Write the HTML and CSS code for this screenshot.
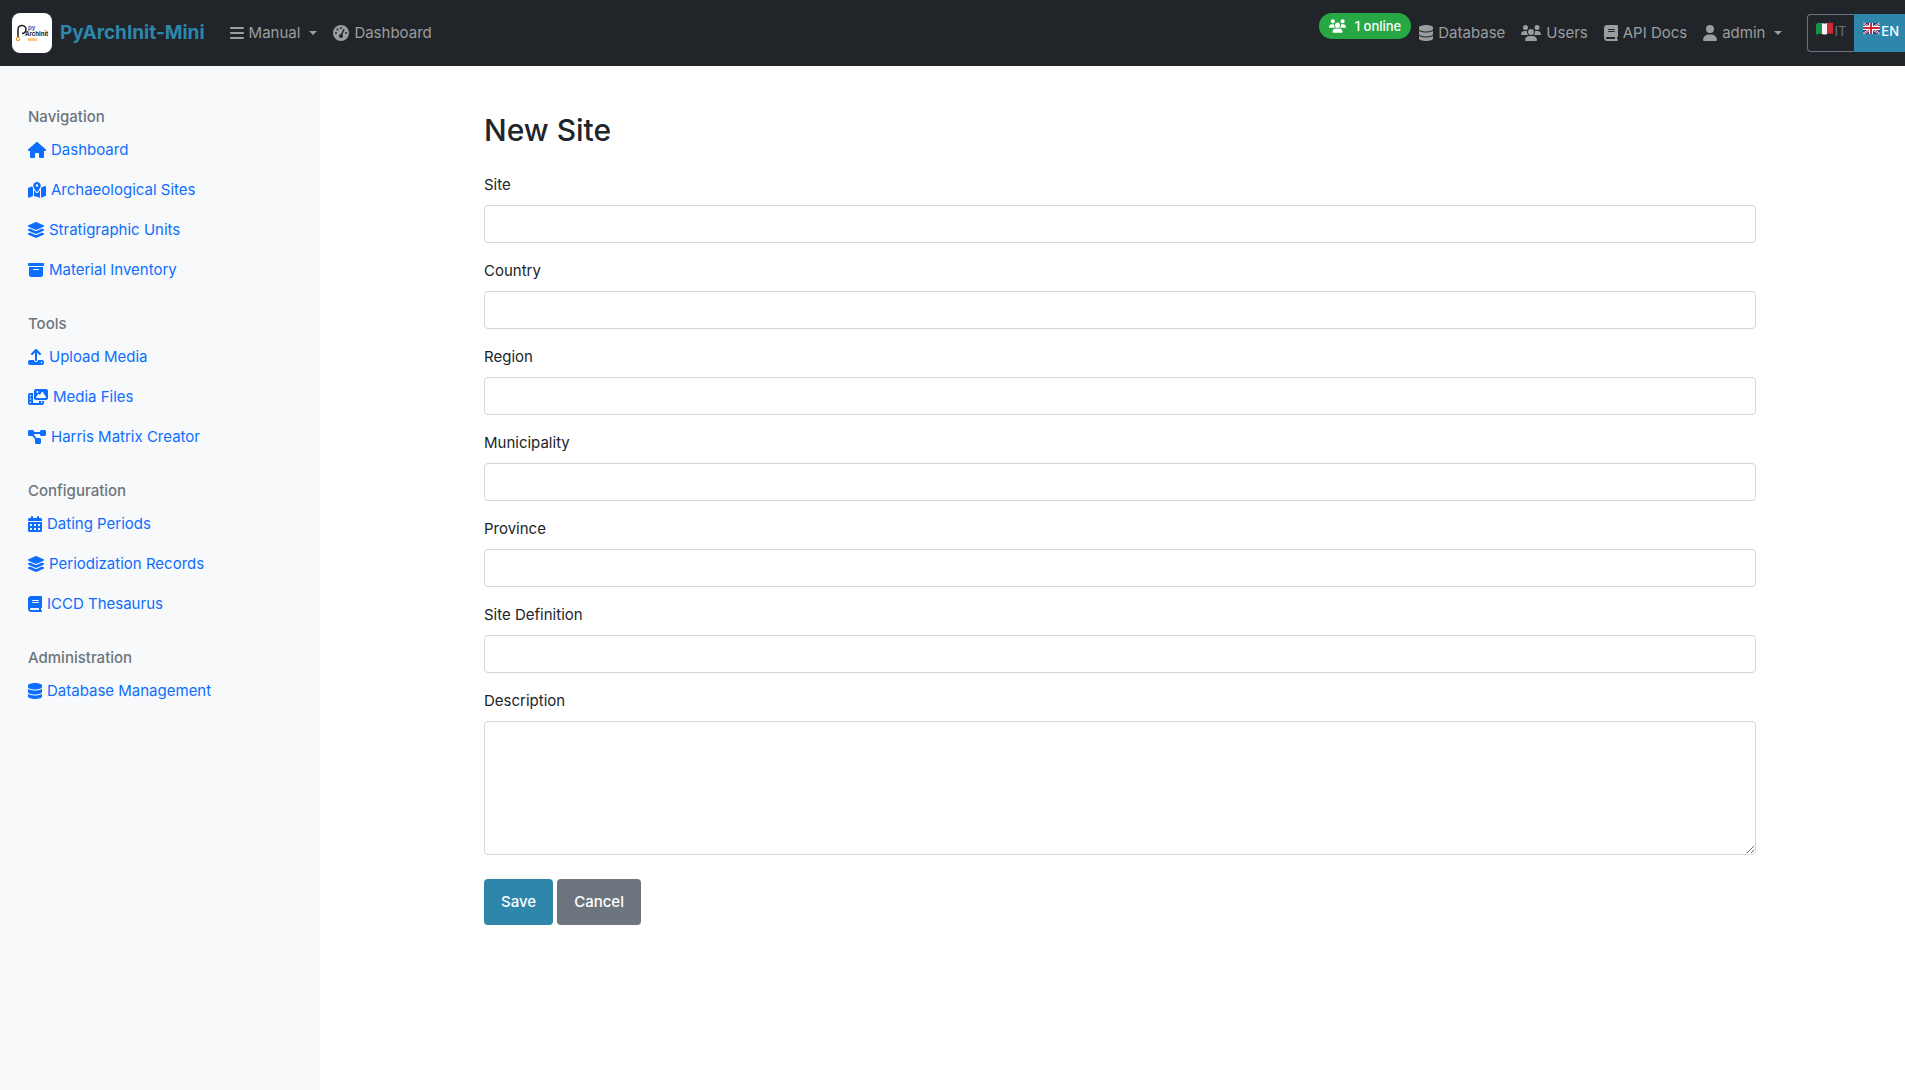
FILE: index.html
```html
<!DOCTYPE html>
<html lang="en">
<head>
<meta charset="utf-8">
<meta name="viewport" content="width=device-width, initial-scale=1">
<title>New Site - PyArchInit-Mini</title>
<link rel="stylesheet" href="styles.css">
</head>
<body>
<svg class="sprite" aria-hidden="true">
  <symbol id="bars" viewBox="0 0 448 512"><path d="M0 96C0 78.300 14.300 64 32 64H416c17.700 0 32 14.300 32 32s-14.300 32-32 32H32C14.300 128 0 113.700 0 96zM0 256c0-17.700 14.300-32 32-32H416c17.700 0 32 14.300 32 32s-14.300 32-32 32H32c-17.700 0-32-14.300-32-32zM448 416c0 17.700-14.300 32-32 32H32c-17.700 0-32-14.300-32-32s14.300-32 32-32H416c17.700 0 32 14.300 32 32z"/></symbol>
  <symbol id="gauge" viewBox="0 0 512 512"><path fill-rule="evenodd" d="M0 256a256 256 0 1 1 512 0A256 256 0 1 1 0 256zM288 96a32 32 0 1 0 -64 0 32 32 0 1 0 64 0zM256 416c35.300 0 64-28.700 64-64c0-17.400-6.900-33.100-18.100-44.600L366 161.700c5.300-12.100-.2-26.300-12.300-31.600s-26.300 .2-31.600 12.300L257.900 288c-.6 0-1.300 0-1.900 0c-35.300 0-64 28.700-64 64s28.700 64 64 64zM176 144a32 32 0 1 0 -64 0 32 32 0 1 0 64 0zM96 288a32 32 0 1 0 0-64 32 32 0 1 0 0 64zm352-32a32 32 0 1 0 -64 0 32 32 0 1 0 64 0z"/></symbol>
  <symbol id="users" viewBox="0 0 640 512"><path d="M144 0a80 80 0 1 1 0 160A80 80 0 1 1 144 0zM512 0a80 80 0 1 1 0 160A80 80 0 1 1 512 0zM0 298.700C0 239.800 47.800 192 106.700 192h42.700c15.900 0 31 3.500 44.600 9.700c-1.300 7.200-1.900 14.700-1.900 22.300c0 38.200 16.800 72.500 43.300 96c-.2 0-.4 0-.7 0H21.300C9.600 320 0 310.400 0 298.700zM405.300 320c-.2 0-.4 0-.7 0c26.600-23.500 43.300-57.800 43.300-96c0-7.600-.7-15-1.900-22.300c13.600-6.300 28.700-9.700 44.600-9.700h42.700C592.200 192 640 239.800 640 298.700c0 11.800-9.600 21.300-21.300 21.300H405.300zM224 224a96 96 0 1 1 192 0 96 96 0 1 1 -192 0zM128 485.300C128 411.700 187.700 352 261.300 352H378.700C452.300 352 512 411.700 512 485.300c0 14.700-11.900 26.700-26.700 26.700H154.700c-14.700 0-26.700-11.900-26.700-26.700z"/></symbol>
  <symbol id="database" viewBox="0 0 448 512"><path d="M448 80v48c0 44.200-100.300 80-224 80S0 172.200 0 128V80C0 35.800 100.300 0 224 0S448 35.800 448 80zM393.200 214.700c20.800-7.400 39.900-16.900 54.800-28.600V288c0 44.200-100.300 80-224 80S0 332.200 0 288V186.100c14.900 11.800 34 21.200 54.800 28.600C99.700 230.700 159.500 240 224 240s124.300-9.300 169.200-25.300zM0 346.100c14.900 11.800 34 21.200 54.800 28.600C99.700 390.700 159.500 400 224 400s124.300-9.300 169.200-25.300c20.800-7.400 39.900-16.900 54.800-28.600V432c0 44.200-100.300 80-224 80S0 476.200 0 432V346.100z"/></symbol>
  <symbol id="book" viewBox="0 0 448 512"><path fill-rule="evenodd" d="M96 0C43 0 0 43 0 96V416c0 53 43 96 96 96H384h32c17.700 0 32-14.300 32-32s-14.300-32-32-32V384c17.700 0 32-14.300 32-32V32c0-17.700-14.300-32-32-32H384 96zm0 384H352v64H96c-17.700 0-32-14.300-32-32s14.300-32 32-32zm32-240c0-8.800 7.200-16 16-16H336c8.800 0 16 7.200 16 16s-7.200 16-16 16H144c-8.800 0-16-7.200-16-16zm16 48H336c8.800 0 16 7.200 16 16s-7.200 16-16 16H144c-8.800 0-16-7.200-16-16s7.200-16 16-16z"/></symbol>
  <symbol id="user" viewBox="0 0 448 512"><path d="M224 256A128 128 0 1 0 224 0a128 128 0 1 0 0 256zm-45.700 48C79.800 304 0 383.800 0 482.300C0 498.700 13.300 512 29.700 512H418.300c16.400 0 29.700-13.300 29.700-29.700C448 383.800 368.200 304 269.700 304H178.300z"/></symbol>
  <symbol id="house" viewBox="0 0 576 512"><path d="M575.800 255.500c0 18-15 32.100-32 32.100h-32l.7 160.200c0 2.700-.2 5.400-.5 8.100V472c0 22.100-17.900 40-40 40H392c-22.100 0-40-17.900-40-40V384c0-17.700-14.300-32-32-32H256c-17.700 0-32 14.300-32 32v88c0 22.100-17.900 40-40 40H104c-22.100 0-40-17.900-40-40V287.600H32c-18 0-32-14-32-32.100c0-9 3-17 10-24L266.400 8c7-7 15-8 22-8s15 2 21 7L564.800 231.500c8 7 12 15 11 24z"/></symbol>
  <symbol id="map" viewBox="0 0 576 512"><path fill-rule="evenodd" d="M408 120c0 54.600-73.100 151.900-105.200 192c-7.700 9.600-22 9.600-29.600 0C241.100 271.900 168 174.600 168 120C168 53.700 221.700 0 288 0s120 53.700 120 120zm8 80.400c3.500-6.900 6.700-13.800 9.600-20.600c.5-1.200 1-2.500 1.500-3.700l116-46.400C558.900 123.400 576 135 576 152V422.800c0 9.800-6 18.600-15.100 22.300L416 503V200.400zM137.600 138.300c2.400 14.100 7.200 28.300 12.800 41.500c2.900 6.800 6.100 13.700 9.600 20.600V451.800L32.900 502.700C17.100 509 0 497.400 0 480.400V209.600c0-9.800 6-18.600 15.100-22.300l122.600-49zM327.800 332c13.900-17.400 35.700-45.700 56.200-77V504.300L192 449.400V255c20.500 31.300 42.300 59.600 56.200 77c20.500 25.600 59.100 25.600 79.600 0zM288 152a40 40 0 1 0 0-80 40 40 0 1 0 0 80z"/></symbol>
  <symbol id="layers" viewBox="32 0 512 512"><path d="M264.500 5.200c14.900-6.900 32.100-6.900 47 0l218.600 101c8.500 3.900 13.900 12.400 13.900 21.800s-5.400 17.900-13.900 21.800l-218.600 101c-14.900 6.900-32.100 6.900-47 0L45.900 149.800C37.400 145.800 32 137.300 32 128s5.400-17.900 13.900-21.800L264.500 5.200zM476.900 209.600l53.200 24.600c8.500 3.900 13.900 12.400 13.900 21.800s-5.400 17.900-13.900 21.800l-218.600 101c-14.900 6.900-32.100 6.900-47 0L45.900 277.800C37.400 273.800 32 265.300 32 256s5.400-17.900 13.900-21.800l53.200-24.600 152 70.200c23.400 10.800 50.400 10.800 73.800 0l152-70.200zm-152 198.200l152-70.200 53.200 24.600c8.500 3.900 13.900 12.400 13.900 21.800s-5.400 17.900-13.900 21.800l-218.600 101c-14.900 6.900-32.100 6.900-47 0L45.900 405.800C37.400 401.800 32 393.300 32 384s5.400-17.900 13.900-21.800l53.200-24.600 152 70.200c23.400 10.800 50.400 10.800 73.800 0z"/></symbol>
  <symbol id="archive" viewBox="0 0 512 512"><path fill-rule="evenodd" d="M32 32H480c17.700 0 32 14.300 32 32V96c0 17.700-14.300 32-32 32H32C14.300 128 0 113.700 0 96V64C0 46.300 14.300 32 32 32zm0 128H480V416c0 35.300-28.700 64-64 64H96c-35.300 0-64-28.700-64-64V160zm128 80c0 8.800 7.200 16 16 16H336c8.800 0 16-7.200 16-16s-7.200-16-16-16H176c-8.800 0-16 7.200-16 16z"/></symbol>
  <symbol id="upload" viewBox="0 0 512 512"><path fill-rule="evenodd" d="M288 109.300V352c0 17.700-14.300 32-32 32s-32-14.300-32-32V109.300l-73.400 73.400c-12.500 12.500-32.800 12.500-45.300 0s-12.500-32.800 0-45.300l128-128c12.500-12.500 32.800-12.500 45.300 0l128 128c12.500 12.500 12.500 32.800 0 45.300s-32.800 12.500-45.300 0L288 109.300zM64 352H192c0 35.300 28.700 64 64 64s64-28.700 64-64H448c35.300 0 64 28.700 64 64v32c0 35.300-28.700 64-64 64H64c-35.300 0-64-28.700-64-64V416c0-35.300 28.700-64 64-64zM432 456a24 24 0 1 0 0-48 24 24 0 1 0 0 48z"/></symbol>
  <symbol id="media" viewBox="0 0 640 512"><path fill-rule="evenodd" d="M256 0H576c35.300 0 64 28.700 64 64V288c0 35.300-28.700 64-64 64H256c-35.300 0-64-28.700-64-64V64c0-35.300 28.700-64 64-64zM476 106.700C471.500 100 464 96 456 96s-15.500 4-20 10.700l-56 84L362.700 169c-4.600-5.700-11.500-9-18.700-9s-14.200 3.300-18.700 9l-64 80c-5.800 7.200-6.900 17.100-2.900 25.400s12.400 13.600 21.600 13.600H552c8.900 0 17-4.900 21.200-12.700s3.700-17.300-1.200-24.600l-96-144zM336 96a32 32 0 1 0 -64 0 32 32 0 1 0 64 0zM64 128h96V384v32c0 17.700 14.300 32 32 32h128c17.700 0 32-14.300 32-32V384H512v64c0 35.300-28.700 64-64 64H64c-35.300 0-64-28.700-64-64V192c0-35.300 28.700-64 64-64zm8 64c-8.800 0-16 7.200-16 16v16c0 8.800 7.200 16 16 16H88c8.800 0 16-7.200 16-16V208c0-8.800-7.200-16-16-16H72zm0 104c-8.800 0-16 7.200-16 16v16c0 8.800 7.200 16 16 16H88c8.800 0 16-7.200 16-16V312c0-8.800-7.200-16-16-16H72zm0 104c-8.800 0-16 7.200-16 16v16c0 8.800 7.200 16 16 16H88c8.800 0 16-7.200 16-16V416c0-8.800-7.200-16-16-16H72zm336 16v16c0 8.800 7.200 16 16 16h16c8.800 0 16-7.200 16-16V416c0-8.800-7.200-16-16-16H424c-8.800 0-16 7.200-16 16z"/></symbol>
  <symbol id="diagram" viewBox="0 0 576 512"><path d="M0 80C0 53.500 21.500 32 48 32h96c26.500 0 48 21.500 48 48V96H384V80c0-26.500 21.500-48 48-48h96c26.500 0 48 21.500 48 48v96c0 26.500-21.500 48-48 48H432c-26.500 0-48-21.500-48-48V160H192v16c0 1.700-.1 3.400-.3 5L272 288h96c26.500 0 48 21.500 48 48v96c0 26.500-21.500 48-48 48H272c-26.500 0-48-21.500-48-48V336c0-1.700 .1-3.400 .3-5L144 224H48c-26.500 0-48-21.500-48-48V80z"/></symbol>
  <symbol id="calendar" viewBox="0 0 448 512"><path fill-rule="evenodd" d="M128 0c17.700 0 32 14.300 32 32V64H288V32c0-17.700 14.300-32 32-32s32 14.300 32 32V64h48c26.500 0 48 21.500 48 48v48H0V112C0 85.500 21.500 64 48 64H96V32c0-17.700 14.300-32 32-32zM0 192H448V464c0 26.500-21.500 48-48 48H48c-26.500 0-48-21.500-48-48V192zM64 256v64h64v-64zM192 256v64h64v-64zM320 256v64h64v-64zM64 384v64h64v-64zM192 384v64h64v-64zM320 384v64h64v-64z"/></symbol>
</svg>

<div class="page">
  <header class="navbar">
    <a class="brand" href="#">
      <svg class="logo" viewBox="0 0 40 40" aria-hidden="true">
        <rect width="40" height="40" rx="8" fill="#fff"/>
        <path d="M6 24V16a4 4 0 1 1 4 4.500" fill="none" stroke="#1d1d1f" stroke-width="1.500"/>
        <circle cx="6" cy="26" r="1.700" fill="none" stroke="#f7941d" stroke-width="1.100"/>
        <text x="16" y="17" class="logo-py">py</text>
        <text x="13" y="23" class="logo-name">ArchInit</text>
        <text x="16" y="28" class="logo-mini">MINI</text>
      </svg>
      <span>PyArchInit-Mini</span>
    </a>
    <nav class="nav-main" aria-label="Main">
      <a class="nav-link" href="#"><svg class="icon w14"><use href="#bars"/></svg>Manual<span class="caret"></span></a>
      <a class="nav-link" href="#"><svg class="icon w16"><use href="#gauge"/></svg>Dashboard</a>
    </nav>
    <nav class="nav-user" aria-label="Account">
      <span class="online"><svg class="icon small"><use href="#users"/></svg>1 online</span>
      <a class="nav-link" href="#"><svg class="icon w14"><use href="#database"/></svg>Database</a>
      <a class="nav-link" href="#"><svg class="icon w20"><use href="#users"/></svg>Users</a>
      <a class="nav-link" href="#"><svg class="icon w14"><use href="#book"/></svg>API Docs</a>
      <a class="nav-link" href="#"><svg class="icon w14"><use href="#user"/></svg>admin<span class="caret"></span></a>
    </nav>
    <div class="lang" role="group" aria-label="Language">
      <button type="button" class="lang-btn"><svg class="flag" viewBox="0 0 17 13" aria-hidden="true"><path fill="#1a8f48" d="M0 2q3-2 6-1v11q-3-1-6 1z"/><path fill="#f4f4f4" d="M6 1q3 1 5 0v11q-2 1-5 0z"/><path fill="#cf2b37" d="M11 1q3-1 6 0v11q-3-1-6 0z"/></svg>IT</button>
      <button type="button" class="lang-btn active"><svg class="flag" viewBox="0 0 17 13" aria-hidden="true"><path fill="#24428f" d="M0 1h17v11H0z"/><path stroke="#fff" stroke-width="2" d="M0 1l17 11M17 1L0 12"/><path stroke="#cf2b37" stroke-width="1" d="M0 1l17 11M17 1L0 12"/><path stroke="#fff" stroke-width="4" d="M8 1v11M0 6h17"/><path stroke="#cf2b37" stroke-width="2" d="M8 1v11M0 6h17"/></svg>EN</button>
    </div>
  </header>

  <div class="layout">
    <aside class="sidebar">
      <section class="group">
        <h6>Navigation</h6>
        <a href="#"><svg class="icon w18"><use href="#house"/></svg>Dashboard</a>
        <a href="#"><svg class="icon w18"><use href="#map"/></svg>Archaeological Sites</a>
        <a href="#"><svg class="icon w16"><use href="#layers"/></svg>Stratigraphic Units</a>
        <a href="#"><svg class="icon w16"><use href="#archive"/></svg>Material Inventory</a>
      </section>
      <section class="group">
        <h6>Tools</h6>
        <a href="#"><svg class="icon w16"><use href="#upload"/></svg>Upload Media</a>
        <a href="#"><svg class="icon w20"><use href="#media"/></svg>Media Files</a>
        <a href="#"><svg class="icon w18"><use href="#diagram"/></svg>Harris Matrix Creator</a>
      </section>
      <section class="group">
        <h6>Configuration</h6>
        <a href="#"><svg class="icon w14"><use href="#calendar"/></svg>Dating Periods</a>
        <a href="#"><svg class="icon w16"><use href="#layers"/></svg>Periodization Records</a>
        <a href="#"><svg class="icon w14"><use href="#book"/></svg>ICCD Thesaurus</a>
      </section>
      <section class="group">
        <h6>Administration</h6>
        <a href="#"><svg class="icon w14"><use href="#database"/></svg>Database Management</a>
      </section>
    </aside>

    <main class="content">
      <form class="site-form">
        <h2>New Site</h2>
        <div class="field"><label for="site">Site</label><input id="site" type="text"></div>
        <div class="field"><label for="country">Country</label><input id="country" type="text"></div>
        <div class="field"><label for="region">Region</label><input id="region" type="text"></div>
        <div class="field"><label for="municipality">Municipality</label><input id="municipality" type="text"></div>
        <div class="field"><label for="province">Province</label><input id="province" type="text"></div>
        <div class="field"><label for="definition">Site Definition</label><input id="definition" type="text"></div>
        <div class="field"><label for="description">Description</label><textarea id="description" rows="5"></textarea></div>
        <div class="actions">
          <button type="submit" class="btn btn-primary">Save</button>
          <a class="btn btn-secondary" href="#">Cancel</a>
        </div>
      </form>
    </main>
  </div>
</div>
</body>
</html>
```
FILE: styles.css
```css
*,
*::before,
*::after {
  box-sizing: border-box;
}

html {
  overflow-x: hidden;
}

body {
  margin: 0;
  background: #fff;
  color: #212529;
  font-family: Inter, "Liberation Sans", sans-serif;
  font-size: 15px;
  line-height: 24px;
}

a {
  text-decoration: none;
}

button,
input,
textarea {
  font: inherit;
}

.sprite {
  display: none;
}

.page {
  display: flex;
  flex-direction: column;
  min-height: 100vh;
  margin-right: -15px;
}

.icon {
  flex: none;
  height: 16px;
  fill: currentColor;
}

.w14 { width: 14px; }
.w16 { width: 16px; }
.w18 { width: 18px; }
.w20 { width: 20px; }

.small {
  width: 17px;
  height: 14px;
}

/* Top bar */
.navbar {
  display: flex;
  align-items: center;
  height: 66px;
  padding: 0 12px;
  background: #212529;
  white-space: nowrap;
}

.brand {
  display: flex;
  align-items: center;
  gap: 8px;
  margin-right: 17px;
  color: #2e86ab;
  font-size: 19px;
  font-weight: 700;
}

.logo {
  width: 40px;
  height: 40px;
}

.logo-py {
  fill: #2b6cb8;
  font-size: 6px;
  font-weight: 700;
}

.logo-name {
  fill: #1d1d1f;
  font-size: 6px;
  font-weight: 700;
}

.logo-mini {
  fill: #f7a23b;
  font-size: 4px;
  font-weight: 700;
}

.nav-main,
.nav-user {
  display: flex;
  align-items: center;
}

.nav-user {
  margin-left: auto;
}

.nav-link {
  display: flex;
  align-items: center;
  gap: 5px;
  padding: 8px;
  color: #9b9d9f;
}

.caret {
  margin-left: 4px;
  border: 4px solid transparent;
  border-top-color: currentColor;
  border-bottom: 0;
}

.online {
  display: flex;
  align-items: center;
  align-self: flex-start;
  gap: 9px;
  height: 26px;
  padding: 0 10px;
  border-radius: 13px;
  background: #28a745;
  color: #fff;
  font-size: 13px;
  font-weight: 500;
}

.lang {
  display: flex;
  height: 38px;
  margin-left: 17px;
}

.lang-btn {
  display: flex;
  align-items: flex-start;
  gap: 1px;
  padding: 6px 8px 0;
  border: 1px solid #6c757d;
  border-right: 0;
  border-radius: 4px 0 0 4px;
  background: transparent;
  color: #6c757d;
  font-size: 13px;
  line-height: 20px;
}

.lang-btn.active {
  border: 1px solid #2e86ab;
  border-radius: 0 4px 4px 0;
  background: #2e86ab;
  color: #fff;
  font-weight: 500;
}

.flag {
  width: 17px;
  height: 13px;
  margin-top: 1px;
}

/* Sidebar */
.layout {
  display: grid;
  flex: 1;
  grid-template-columns: 1fr 5fr;
}

.sidebar {
  display: flex;
  flex-direction: column;
  gap: 24px;
  padding: 41px 28px;
  background: #f8f9fa;
}

.group {
  display: flex;
  flex-direction: column;
}

.group h6 {
  margin: 0 0 4px;
  color: #6c757d;
  font-size: 15px;
  font-weight: 500;
  line-height: 19px;
}

.group a {
  display: flex;
  align-items: center;
  gap: 5px;
  padding: 8px 0;
  color: #0d6efd;
  white-space: nowrap;
}

/* Form */
.content {
  padding: 45px 24px;
}

.site-form {
  max-width: 1272px;
  margin: 0 auto;
}

h2 {
  margin: 0 0 24px;
  font-size: 30px;
  font-weight: 500;
  line-height: 38px;
}

.field {
  display: flex;
  flex-direction: column;
  gap: 8px;
  margin-bottom: 16px;
}

.field input,
.field textarea {
  display: block;
  width: 100%;
  padding: 6px 12px;
  border: 1px solid #d2d7dc;
  border-radius: 4px;
  background: #fff;
  color: inherit;
}

.field input {
  height: 38px;
}

.field textarea {
  resize: vertical;
}

.actions {
  display: flex;
  gap: 4px;
  padding-top: 8px;
}

.btn {
  padding: 10px 16px;
  border: 1px solid transparent;
  border-radius: 4px;
  color: #fff;
  font-weight: 500;
}

.btn-primary {
  background: #2e86ab;
}

.btn-secondary {
  background: #6c757d;
}
```
